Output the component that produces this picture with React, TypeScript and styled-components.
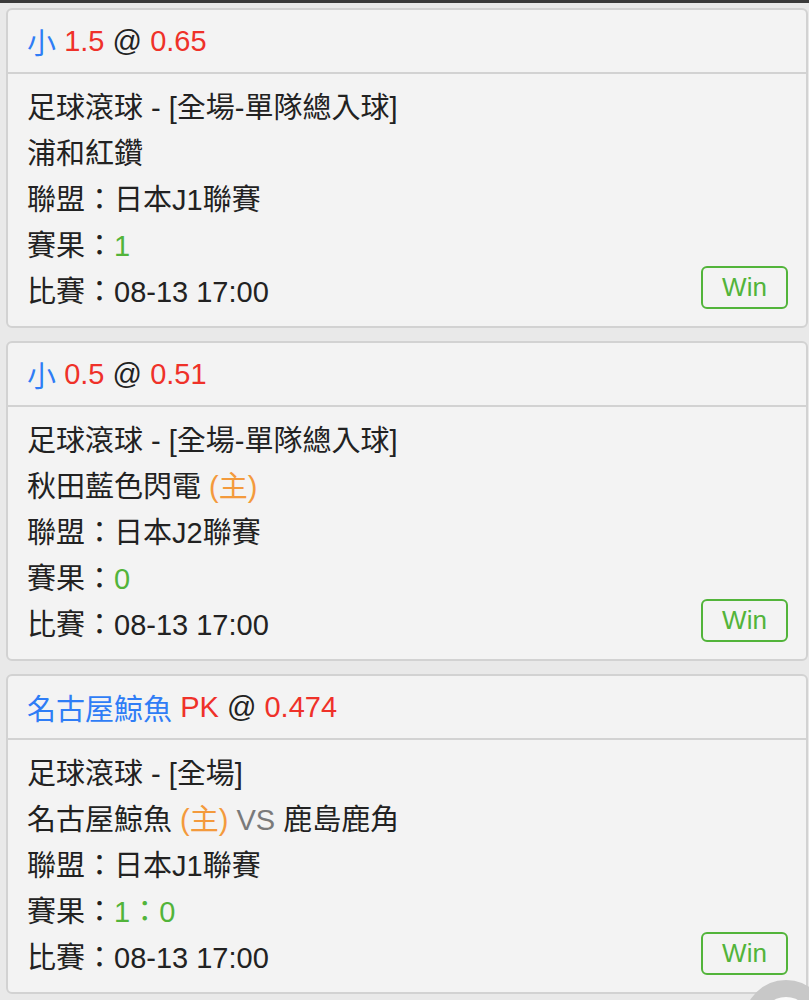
import { FC, ReactNode } from 'react';
import styled, { createGlobalStyle } from 'styled-components';

const GlobalStyle = createGlobalStyle`
  html, body {
    margin: 0;
    padding: 0;
    background: #e9e9e9;
  }
  body {
    font-family: 'Liberation Sans', 'Noto Sans CJK TC', sans-serif;
    color: #222;
  }
`;

const colors = {
  blue: '#2f7df6',
  red: '#ef3129',
  green: '#52b43a',
  orange: '#f39a3c',
  gray: '#7a7a7a',
  text: '#222',
};

const Page = styled.div`
  border-top: 3px solid #3a3a3a;
  padding: 5px 1px 0 6px;
  display: flex;
  flex-direction: column;
  gap: 13px;
`;

const Card = styled.div`
  background: #f3f3f3;
  border: 2px solid #d2d2d2;
  border-radius: 6px;
`;

const CardHeader = styled.div`
  height: 62px;
  display: flex;
  align-items: center;
  gap: 0.28em;
  padding-left: 19px;
  font-size: 29px;
  border-bottom: 2px solid #d2d2d2;
  white-space: pre;
`;

const CardBody = styled.div`
  display: grid;
  grid-template-columns: 1fr auto;
  padding: 11px 18px 11px 19px;
`;

const Lines = styled.div`
  display: flex;
  flex-direction: column;
`;

const Line = styled.div`
  height: 46px;
  line-height: 46px;
  font-size: 29px;
  white-space: pre;
`;

const Tone = styled.span<{ tone: keyof typeof colors }>`
  color: ${({ tone }) => colors[tone]};
`;

const WinButton = styled.div`
  align-self: end;
  margin-bottom: 6px;
  width: 87px;
  height: 43px;
  box-sizing: border-box;
  border: 2px solid ${colors.green};
  border-radius: 6px;
  color: ${colors.green};
  font-size: 26px;
  display: flex;
  align-items: center;
  justify-content: center;
`;

const FloatButton = styled.div`
  position: fixed;
  left: 744px;
  top: 980px;
  width: 84px;
  height: 84px;
  box-sizing: border-box;
  border-radius: 50%;
  border: 17px solid #c8c8c8;
  background: #fafafa;
`;

type Bet = {
  id: string;
  pick: string;
  handicap: string;
  odds: string;
  market: string;
  team: ReactNode;
  league: string;
  result: string;
  time: string;
};

const bets: Bet[] = [
  {
    id: 'a',
    pick: '小',
    handicap: '1.5',
    odds: '0.65',
    market: '足球滾球 - [全場-單隊總入球]',
    team: '浦和紅鑽',
    league: '日本J1聯賽',
    result: '1',
    time: '08-13 17:00',
  },
  {
    id: 'b',
    pick: '小',
    handicap: '0.5',
    odds: '0.51',
    market: '足球滾球 - [全場-單隊總入球]',
    team: (
      <>
        秋田藍色閃電{' '}
        <Tone tone="orange">(主)</Tone>
      </>
    ),
    league: '日本J2聯賽',
    result: '0',
    time: '08-13 17:00',
  },
  {
    id: 'c',
    pick: '名古屋鯨魚',
    handicap: 'PK',
    odds: '0.474',
    market: '足球滾球 - [全場]',
    team: (
      <>
        名古屋鯨魚{' '}
        <Tone tone="orange">(主)</Tone>{' '}
        <Tone tone="gray">VS</Tone>{' '}
        鹿島鹿角
      </>
    ),
    league: '日本J1聯賽',
    result: '1：0',
    time: '08-13 17:00',
  },
];

const BetCard: FC<{ bet: Bet }> = ({ bet }) => (
  <Card>
    <CardHeader>
      <Tone tone="blue">{bet.pick}</Tone>
      <Tone tone="red">{bet.handicap}</Tone>
      <Tone tone="text">@</Tone>
      <Tone tone="red">{bet.odds}</Tone>
    </CardHeader>
    <CardBody>
      <Lines>
        <Line>{bet.market}</Line>
        <Line>{bet.team}</Line>
        <Line>聯盟：{bet.league}</Line>
        <Line>
          賽果：<Tone tone="green">{bet.result}</Tone>
        </Line>
        <Line>比賽：{bet.time}</Line>
      </Lines>
      <WinButton>Win</WinButton>
    </CardBody>
  </Card>
);

export default function App() {
  return (
    <>
      <GlobalStyle />
      <Page>
        {bets.map((bet) => (
          <BetCard key={bet.id} bet={bet} />
        ))}
      </Page>
      <FloatButton />
    </>
  );
}
